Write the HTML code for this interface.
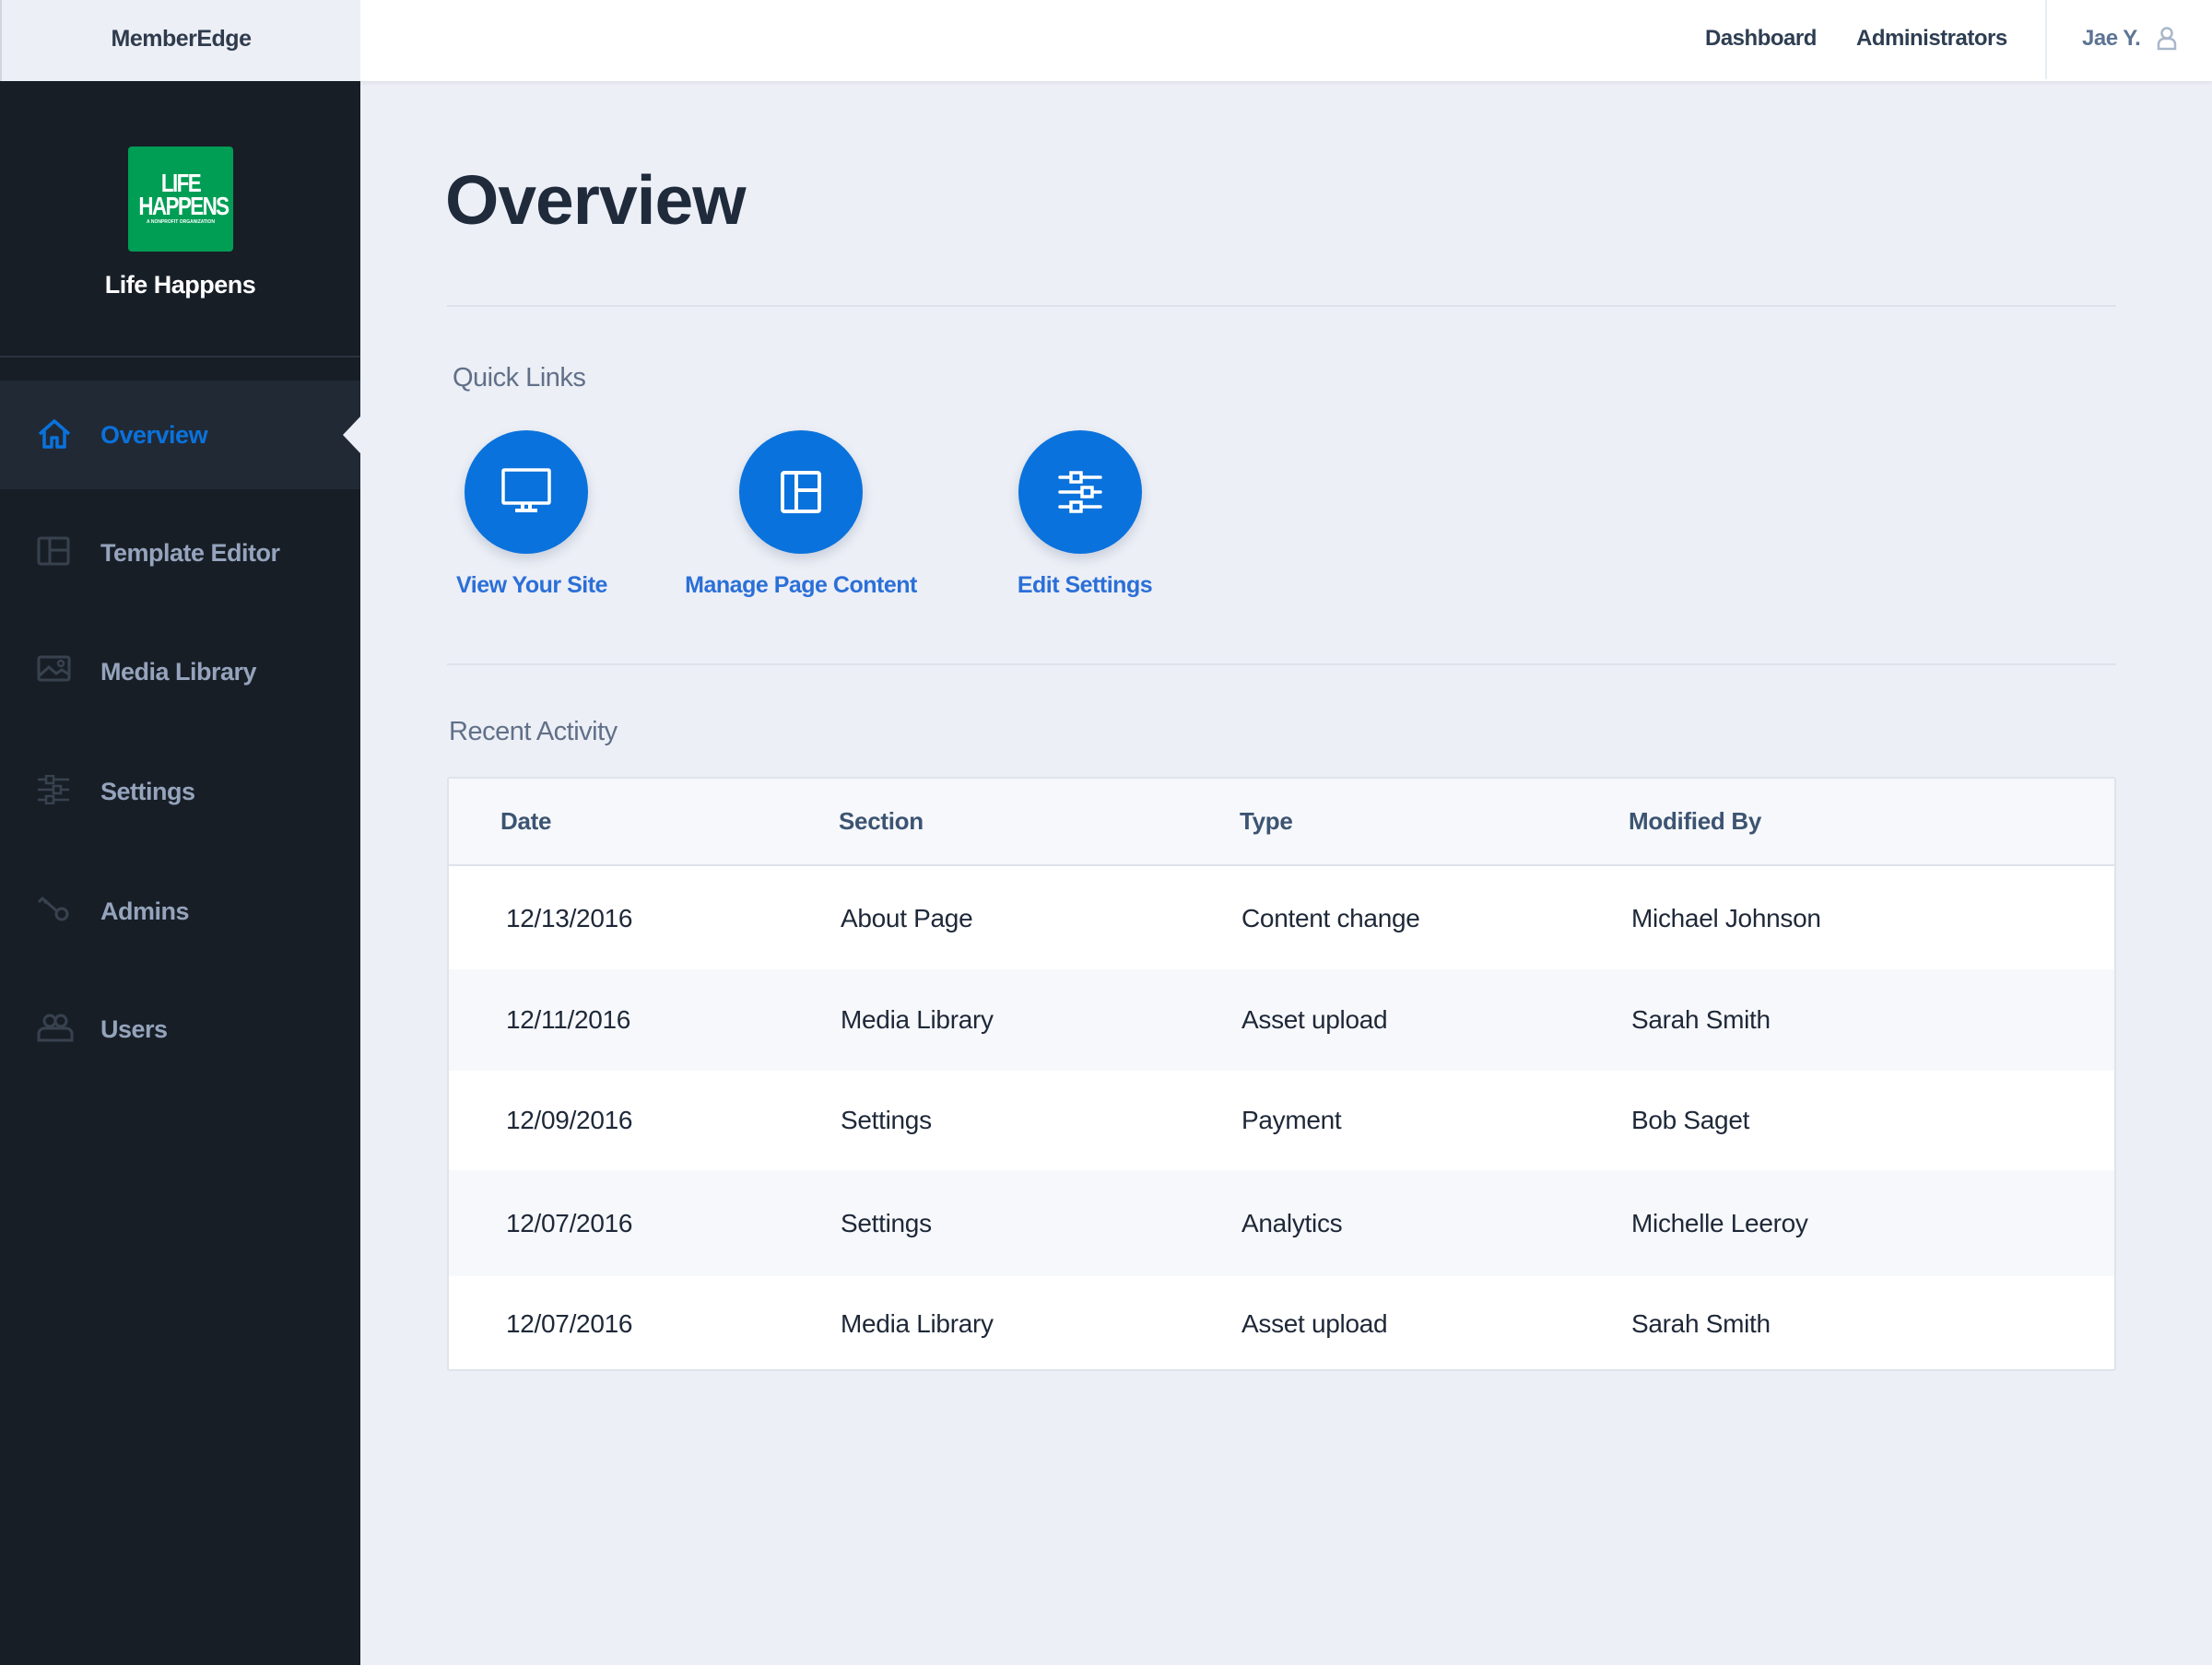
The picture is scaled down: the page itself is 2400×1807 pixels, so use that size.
<!DOCTYPE html>
<html><head><meta charset="utf-8"><style>
*{margin:0;padding:0;box-sizing:border-box}
body{width:2400px;height:1807px;background:#eceff6;font-family:"Liberation Sans",sans-serif;position:relative;overflow:hidden}
.abs{position:absolute}
#top{left:0;top:0;width:2400px;height:88px;background:#fff;box-shadow:0 2px 4px rgba(0,0,0,.06)}
#brand{left:0;top:0;width:391px;height:88px;background:#eceff5;border-left:2px solid #cfd5de;font-size:25px;color:#2f3b4d;font-weight:bold;line-height:84px;text-align:center;letter-spacing:-0.5px}
.tn{top:0;line-height:84px;font-size:24px;color:#2e3e52;font-weight:bold;letter-spacing:-0.5px}
#side{left:0;top:88px;width:391px;height:1719px;background:#171e26}
#logo{left:139px;top:159px;width:114px;height:114px;background:#009d55;border-radius:4px;color:#fff;font-weight:bold;text-align:center}
.nav{left:0;width:391px;height:118px;font-size:27px;color:#95a3bc;font-weight:bold;letter-spacing:-0.5px}
.nav span{position:absolute;left:109px;top:0;line-height:118px}
.nav svg{position:absolute;left:40px;top:41px}
h1{position:absolute;left:483px;top:172px;font-size:75px;font-weight:bold;color:#1f2a3b;letter-spacing:-1px;line-height:90px}
.hr{left:485px;width:1811px;height:2px;background:#dde2ea}
.sec{font-size:29px;color:#617088;letter-spacing:-0.5px}
.circ{width:134px;height:134px;border-radius:50%;background:#0a72dc;box-shadow:0 6px 12px rgba(40,60,100,.18)}
.circ svg{position:absolute;left:37px;top:37px}
.ql{top:621px;font-size:25px;color:#2b6fd8;font-weight:bold;letter-spacing:-0.5px;width:400px;text-align:center}
#tbl{left:485px;top:843px;width:1811px;height:645px;background:#fff;border:2px solid #dfe3ea;border-radius:3px;overflow:hidden}
.row{position:absolute;left:0;width:1811px}
.row div{position:absolute;top:0;height:100%;display:flex;align-items:center;font-size:28px;color:#1e2838;letter-spacing:-0.3px}
.hd div{font-size:26px;color:#3c5472;font-weight:bold}
</style></head><body>
<div id="top" class="abs"></div>
<div id="brand" class="abs">MemberEdge</div>
<div class="abs tn" style="left:1850px">Dashboard</div>
<div class="abs tn" style="left:2014px">Administrators</div>
<div class="abs" style="left:2219px;top:0;width:2px;height:86px;background:#e8edf3"></div>
<div class="abs tn" style="left:2259px;color:#5d7593">Jae Y.</div>
<svg class="abs" style="left:2340px;top:29px" width="22" height="26" viewBox="0 0 22 26"><circle cx="11" cy="7" r="5.5" fill="none" stroke="#a9b7c9" stroke-width="2.5"/><path d="M2 24 v-5 a6 6 0 0 1 6 -6 h6 a6 6 0 0 1 6 6 v5z" fill="none" stroke="#a9b7c9" stroke-width="2.5"/></svg>

<div id="side" class="abs"></div>
<div id="logo" class="abs"><div style="font-size:28px;line-height:24px;margin-top:28px;letter-spacing:-2px;transform:scaleX(.8)">LIFE</div><div style="font-size:28px;line-height:26px;letter-spacing:-2px;transform:scaleX(.8)">HAPPENS</div><div style="font-size:5px;line-height:8px">A NONPROFIT ORGANIZATION</div></div>
<div class="abs" style="left:0;top:294px;width:391px;text-align:center;color:#fff;font-size:27px;font-weight:bold;letter-spacing:-0.5px">Life Happens</div>
<div class="abs" style="left:0;top:386px;width:391px;height:2px;background:#2a323d"></div>

<div class="abs nav" style="top:413px;background:#212935;color:#0a72dc"><svg width="38" height="34" viewBox="0 0 38 34"><path d="M3 17 L19 3 L35 17 M8 13 V31 H16 V21 H22 V31 H30 V13" fill="none" stroke="#0a72dc" stroke-width="3.5" stroke-linejoin="round"/></svg><span>Overview</span></div>
<div class="abs" style="left:372px;top:452px;width:0;height:0;border-top:20px solid transparent;border-bottom:20px solid transparent;border-right:19px solid #eceff6"></div>
<div class="abs nav" style="top:541px"><svg width="36" height="32" viewBox="0 0 36 32"><rect x="2" y="2" width="32" height="28" rx="2" fill="none" stroke="#38424f" stroke-width="3"/><path d="M14 2 V30 M14 15 H34" stroke="#38424f" stroke-width="3"/></svg><span>Template Editor</span></div>
<div class="abs nav" style="top:670px"><svg width="38" height="30" viewBox="0 0 38 30"><rect x="2" y="2" width="33" height="25" rx="2" fill="none" stroke="#38424f" stroke-width="3"/><path d="M3 22 L13 13 L21 20 L27 16 L35 21" fill="none" stroke="#38424f" stroke-width="3"/><circle cx="26" cy="9" r="3" fill="none" stroke="#38424f" stroke-width="2.5"/></svg><span>Media Library</span></div>
<div class="abs nav" style="top:800px"><svg width="36" height="32" viewBox="0 0 36 32"><path d="M1 5 H35 M1 16 H35 M1 27 H35" stroke="#38424f" stroke-width="2.5"/><rect x="10" y="1" width="8" height="8" fill="#171e26" stroke="#38424f" stroke-width="2.5"/><rect x="18" y="12" width="8" height="8" fill="#171e26" stroke="#38424f" stroke-width="2.5"/><rect x="10" y="23" width="8" height="8" fill="#171e26" stroke="#38424f" stroke-width="2.5"/></svg><span>Settings</span></div>
<div class="abs nav" style="top:930px"><svg width="36" height="32" viewBox="0 0 36 32"><path d="M2 8 L6 4 L22 18 M8 9 L11 6" fill="none" stroke="#38424f" stroke-width="3"/><circle cx="27" cy="21" r="6" fill="none" stroke="#38424f" stroke-width="3"/></svg><span>Admins</span></div>
<div class="abs nav" style="top:1058px"><svg width="40" height="32" viewBox="0 0 40 32"><circle cx="14" cy="9" r="6" fill="none" stroke="#38424f" stroke-width="3"/><circle cx="26" cy="9" r="6" fill="none" stroke="#38424f" stroke-width="3"/><path d="M2 30 V23 a6 6 0 0 1 6-6 h24 a6 6 0 0 1 6 6 v7z" fill="none" stroke="#38424f" stroke-width="3"/></svg><span>Users</span></div>

<h1>Overview</h1>
<div class="abs hr" style="top:331px"></div>
<div class="abs sec" style="left:491px;top:394px">Quick Links</div>
<div class="abs circ" style="left:504px;top:467px"><svg width="60" height="60" viewBox="0 0 60 60"><rect x="5" y="6" width="50" height="36" fill="none" stroke="#fff" stroke-width="3.5" rx="1"/><path d="M26 42 V49 M34 42 V49 M18 50 H42" stroke="#fff" stroke-width="4"/></svg></div>
<div class="abs circ" style="left:802px;top:467px"><svg width="60" height="60" viewBox="0 0 60 60"><rect x="10" y="9" width="40" height="42" rx="2" fill="none" stroke="#fff" stroke-width="4"/><path d="M25 9 V51 M25 28 H50" stroke="#fff" stroke-width="4"/></svg></div>
<div class="abs circ" style="left:1105px;top:467px"><svg width="60" height="60" viewBox="0 0 60 60"><path d="M8 14 H52 M8 30 H52 M8 46 H52" stroke="#fff" stroke-width="3.5" stroke-linecap="round"/><rect x="20" y="9" width="11" height="10" fill="#0a72dc" stroke="#fff" stroke-width="3.5"/><rect x="32" y="25" width="11" height="10" fill="#0a72dc" stroke="#fff" stroke-width="3.5"/><rect x="20" y="41" width="11" height="10" fill="#0a72dc" stroke="#fff" stroke-width="3.5"/></svg></div>
<div class="abs ql" style="left:377px">View Your Site</div>
<div class="abs ql" style="left:669px">Manage Page Content</div>
<div class="abs ql" style="left:977px">Edit Settings</div>
<div class="abs hr" style="top:720px"></div>
<div class="abs sec" style="left:487px;top:778px">Recent Activity</div>

<div id="tbl" class="abs">
<div class="row hd" style="top:0;height:95px;background:#f7f8fb;border-bottom:2px solid #dde2ea"><div style="left:56px">Date</div><div style="left:423px">Section</div><div style="left:858px">Type</div><div style="left:1280px">Modified By</div></div>
<div class="row" style="top:97px;height:110px;background:#fff"><div style="left:62px">12/13/2016</div><div style="left:425px">About Page</div><div style="left:860px">Content change</div><div style="left:1283px">Michael Johnson</div></div>
<div class="row" style="top:207px;height:110px;background:#f7f8fb"><div style="left:62px">12/11/2016</div><div style="left:425px">Media Library</div><div style="left:860px">Asset upload</div><div style="left:1283px">Sarah Smith</div></div>
<div class="row" style="top:317px;height:108px;background:#fff"><div style="left:62px">12/09/2016</div><div style="left:425px">Settings</div><div style="left:860px">Payment</div><div style="left:1283px">Bob Saget</div></div>
<div class="row" style="top:425px;height:115px;background:#f7f8fb"><div style="left:62px">12/07/2016</div><div style="left:425px">Settings</div><div style="left:860px">Analytics</div><div style="left:1283px">Michelle Leeroy</div></div>
<div class="row" style="top:540px;height:103px;background:#fff"><div style="left:62px">12/07/2016</div><div style="left:425px">Media Library</div><div style="left:860px">Asset upload</div><div style="left:1283px">Sarah Smith</div></div>
</div>
</body></html>
